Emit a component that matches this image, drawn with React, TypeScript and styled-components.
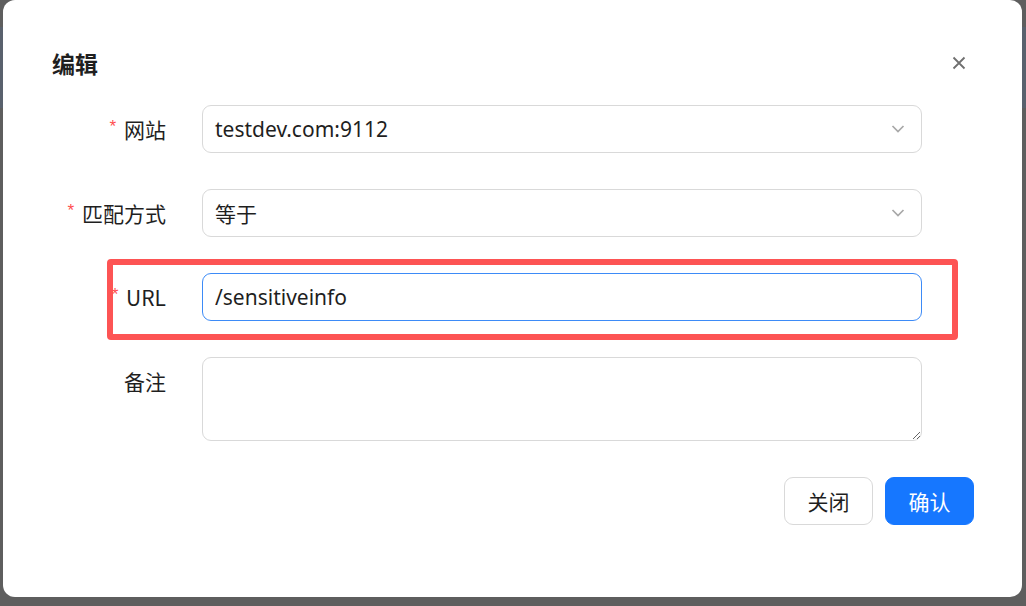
import React from "react";
import styled, { createGlobalStyle } from "styled-components";

const GlobalStyle = createGlobalStyle`
  html, body {
    margin: 0;
    padding: 0;
    overflow: hidden;
  }
  body {
    font-family: "Noto Sans", "Noto Sans CJK SC", sans-serif;
  }
`;

const Page = styled.div`
  width: 1026px;
  height: 606px;
  box-sizing: border-box;
  padding-left: 3px;
  background: linear-gradient(
    to bottom,
    #5e5e5e 0,
    #5e5e5e 27px,
    #59616d 27px,
    #59616d 108px,
    #5e5e5e 108px
  );
`;

const Modal = styled.div`
  position: relative;
  width: 1019px;
  height: 597px;
  box-sizing: border-box;
  background: #fff;
  border-radius: 12px;
  padding: 46px 48px 0 49px;
  display: flex;
  flex-direction: column;
`;

const Header = styled.div`
  display: flex;
  align-items: center;
  justify-content: space-between;
  height: 34px;
  margin-bottom: 25px;
`;

const Title = styled.div`
  font-family: "Noto Sans CJK SC", sans-serif;
  font-size: 23px;
  font-weight: 700;
  color: #1f1f1f;
  line-height: 34px;
`;

const CloseBtn = styled.button`
  width: 24px;
  height: 24px;
  margin-right: 3px;
  border: none;
  background: transparent;
  padding: 0;
  display: flex;
  align-items: center;
  justify-content: center;
  cursor: pointer;
`;

const Form = styled.div`
  display: flex;
  flex-direction: column;
  gap: 36px;
`;

const Row = styled.div`
  display: flex;
  align-items: flex-start;
`;

const Label = styled.label`
  width: 150px;
  box-sizing: border-box;
  padding-right: 36px;
  height: 48px;
  display: flex;
  align-items: center;
  justify-content: flex-end;
  font-family: "Noto Sans CJK SC", sans-serif;
  font-size: 21px;
  color: #1f1f1f;
`;

const Required = styled.span`
  color: #ff4d4f;
  font-family: "Liberation Mono", monospace;
  font-size: 17px;
  margin-right: 6px;
  align-self: flex-start;
  margin-top: 13px;
`;

const Field = styled.div<{ $focused?: boolean }>`
  width: 720px;
  height: 48px;
  box-sizing: border-box;
  border: 1px solid ${(p) => (p.$focused ? "#3d8bf7" : "#d9d9d9")};
  border-radius: 9px;
  background: #fff;
  display: flex;
  align-items: center;
  padding: 0 16px 0 12px;
`;

const Value = styled.span`
  flex: 1;
  font-family: "Noto Sans", "Noto Sans CJK SC", sans-serif;
  font-size: 21px;
  color: #1f1f1f;
`;

const TextInput = styled.input`
  flex: 1;
  border: none;
  outline: none;
  padding: 0;
  font-family: "Noto Sans", "Noto Sans CJK SC", sans-serif;
  font-size: 21px;
  color: #1f1f1f;
  background: transparent;
`;

const TextArea = styled.textarea`
  width: 720px;
  height: 84px;
  box-sizing: border-box;
  border: 1px solid #d9d9d9;
  border-radius: 9px;
  padding: 8px 12px;
  font-family: "Noto Sans", "Noto Sans CJK SC", sans-serif;
  font-size: 21px;
  resize: vertical;
  outline: none;
`;

const Footer = styled.div`
  display: flex;
  justify-content: flex-end;
  gap: 12px;
  margin-top: 36px;
`;

const Button = styled.button<{ $primary?: boolean }>`
  width: 89px;
  height: 48px;
  border-radius: 9px;
  border: 1px solid ${(p) => (p.$primary ? "#1677ff" : "#d9d9d9")};
  background: ${(p) => (p.$primary ? "#1677ff" : "#fff")};
  color: ${(p) => (p.$primary ? "#fff" : "#1f1f1f")};
  font-family: "Noto Sans CJK SC", sans-serif;
  font-size: 21px;
  padding: 0;
  cursor: pointer;
`;

const Highlight = styled.div`
  position: absolute;
  left: 104px;
  top: 259px;
  width: 851px;
  height: 81px;
  box-sizing: border-box;
  border: 6px solid #fd5454;
  border-radius: 4px;
  pointer-events: none;
`;

const Chevron = () => (
  <svg width="14" height="10" viewBox="0 0 14 10">
    <path d="M1.5 2 L7 7.5 L12.5 2" fill="none" stroke="#a8a8a8" strokeWidth="1.7" />
  </svg>
);

const CloseIcon = () => (
  <svg width="14" height="14" viewBox="0 0 14 14">
    <path d="M1.5 1.5 L12.5 12.5 M12.5 1.5 L1.5 12.5" stroke="#6f6f6f" strokeWidth="1.8" />
  </svg>
);

export default function App() {
  return (
    <Page>
      <GlobalStyle />
      <Modal>
        <Header>
          <Title>编辑</Title>
          <CloseBtn aria-label="close">
            <CloseIcon />
          </CloseBtn>
        </Header>
        <Form>
          <Row>
            <Label>
              <Required>*</Required>网站
            </Label>
            <Field>
              <Value>testdev.com:9112</Value>
              <Chevron />
            </Field>
          </Row>
          <Row>
            <Label>
              <Required>*</Required>匹配方式
            </Label>
            <Field>
              <Value>等于</Value>
              <Chevron />
            </Field>
          </Row>
          <Row>
            <Label>
              <Required>*</Required>URL
            </Label>
            <Field $focused>
              <TextInput defaultValue="/sensitiveinfo" />
            </Field>
          </Row>
          <Row>
            <Label>备注</Label>
            <TextArea />
          </Row>
        </Form>
        <Footer>
          <Button>关闭</Button>
          <Button $primary>确认</Button>
        </Footer>
        <Highlight />
      </Modal>
    </Page>
  );
}
